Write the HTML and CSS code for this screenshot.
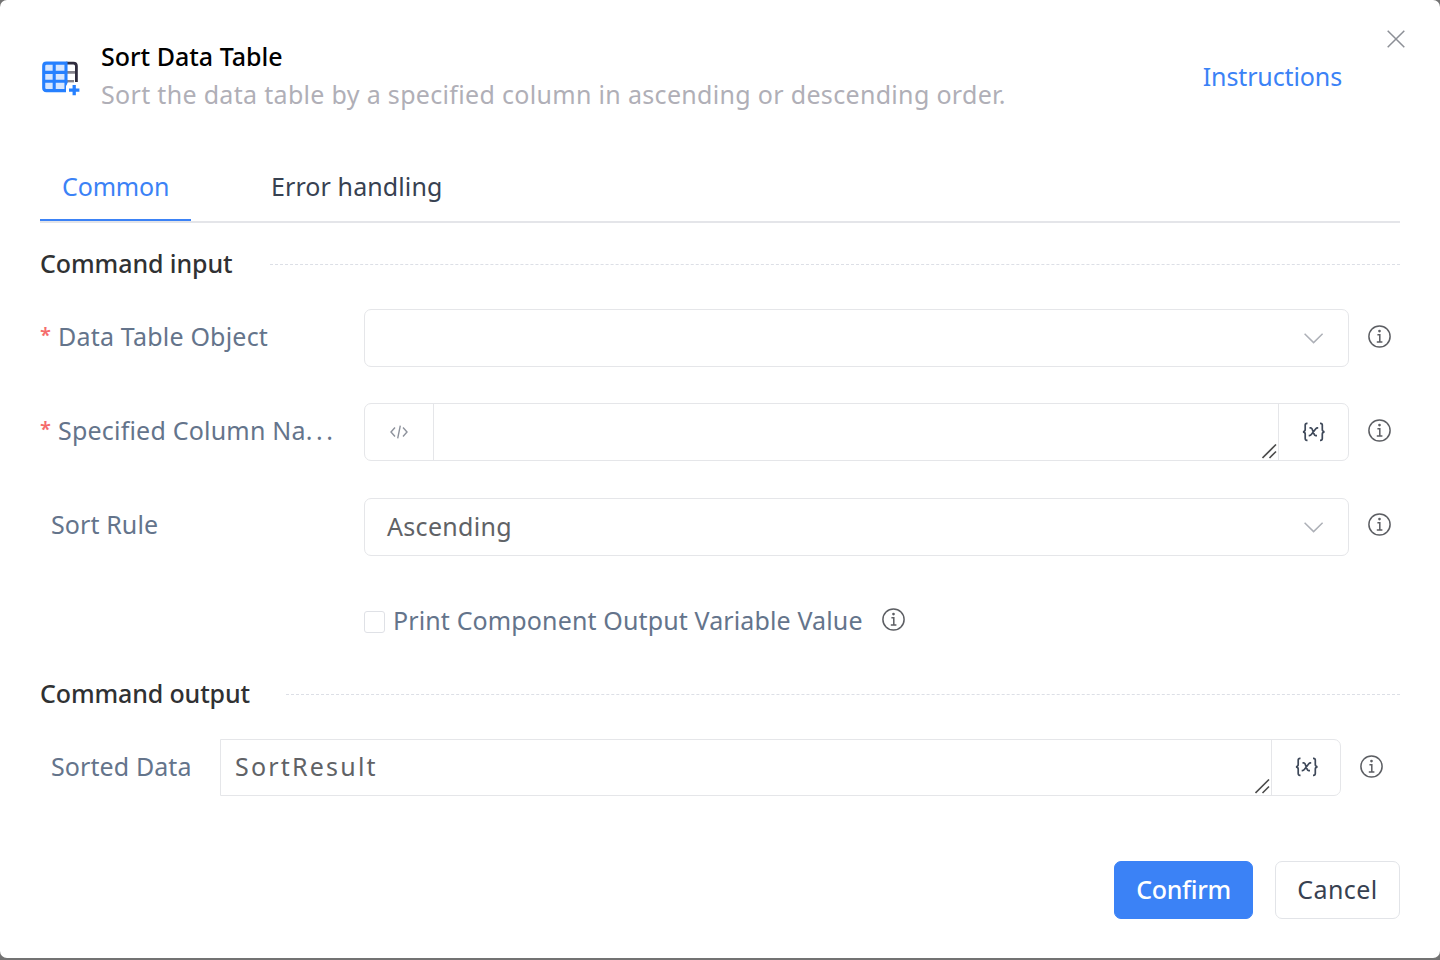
FILE: index.html
```
<!DOCTYPE html>
<html lang="en">
<head>
<meta charset="utf-8">
<title>Sort Data Table</title>
<link rel="stylesheet" href="styles.css">
</head>
<body>
<svg width="0" height="0" class="defs">
  <symbol id="info" viewBox="0 0 24 24"><g fill="none" stroke="#5c5e63" stroke-width="1.5"><circle cx="11.5" cy="11.5" r="10.6"/><path d="M9.4 9.8h2.4v7.2M8.8 17h5.6"/></g><circle cx="11.5" cy="6.1" r="1.35" fill="#5c5e63"/></symbol>
  <symbol id="variable" viewBox="0 0 24 20"><g fill="none" stroke="#3e4859" stroke-width="1.7"><path d="M5.5 1.3H5Q3.2 1.3 3.2 3V7.6Q3.2 9.5 1 9.8Q3.2 10.1 3.2 12V16.6Q3.2 18.3 5 18.3H5.5"/><path d="M18 1.3H18.5Q20.3 1.3 20.3 3V7.6Q20.3 9.5 22.5 9.8Q20.3 10.1 20.3 12V16.6Q20.3 18.3 18.5 18.3H18"/><path d="M7.5 5.8H8.7Q9.6 5.8 10 6.8L12.2 12.4Q12.7 13.6 13.7 13.6H15M16.2 5.8H15.5Q14.5 5.8 13.8 6.7L9.3 12.5Q8.5 13.6 7.3 13.6H6.7"/></g></symbol>
  <symbol id="chevron" viewBox="0 0 20 12"><path d="M.6 1.8L9.6 10.6L18.6 1.8" fill="none" stroke="#adb0b7" stroke-width="1.5"/></symbol>
  <symbol id="grip" viewBox="0 0 15 15"><path d="M.5 14L14 .5M7.5 14L14 7.5" fill="none" stroke="#4d4d4d" stroke-width="1.6"/></symbol>
</svg>
<main class="dialog">
  <header class="header">
    <svg class="logo" viewBox="0 0 40 36">
      <path d="M26 12.4H36M26 21.3H34" stroke="#85838c" stroke-width="2.8"/>
      <path d="M26 3.1H33.5Q36.4 3.1 36.4 6V22" fill="none" stroke="#302d3e" stroke-width="2.8"/>
      <path d="M6.5 3.1H26V30.6H6.5Q3.7 30.6 3.7 28V6Q3.7 3.1 6.5 3.1Z" fill="#d6e6ff" stroke="#2680ff" stroke-width="3.1"/>
      <path d="M14.2 3V31M4 12.4H26M4 21.3H26" stroke="#2680ff" stroke-width="3.1"/>
      <path d="M28 22.5H40V36H26V26Z" fill="#fff"/>
      <path d="M34.2 24.9V35.3M29 30.1H39.4" stroke="#2680ff" stroke-width="3.3"/>
    </svg>
    <div class="heading">
      <h1 class="title">Sort Data Table</h1>
      <p class="subtitle">Sort the data table by a specified column in ascending or descending order.</p>
    </div>
    <a class="instructions">Instructions</a>
    <svg class="close" viewBox="0 0 18 18"><path d="M.7 .7L17.3 17.3M17.3 .7L.7 17.3" stroke="#8c8f96" stroke-width="1.5"/></svg>
  </header>
  <nav class="tabs">
    <div class="tab tab-active">Common</div>
    <div class="tab">Error handling</div>
  </nav>
  <h2 class="section section-input"><span>Command input</span></h2>
  <div class="row">
    <label class="label"><i class="star">*</i><span>Data Table Object</span></label>
    <div class="control"><span class="grow"></span><svg class="chevron"><use href="#chevron"/></svg></div>
    <svg class="info"><use href="#info"/></svg>
  </div>
  <div class="row row-column">
    <label class="label"><i class="star">*</i><span>Specified Column Na<span class="dots">...</span></span></label>
    <div class="control">
      <span class="prefix"><svg class="code" viewBox="0 0 18 14"><path d="M5 2.5L1 7L5 11.5M13 2.5L17 7L13 11.5M10.3 .7L7.7 13.3" fill="none" stroke="#8d929c" stroke-width="1.4"/></svg></span>
      <span class="grow field"><svg class="grip"><use href="#grip"/></svg></span>
      <span class="suffix"><svg class="variable"><use href="#variable"/></svg></span>
    </div>
    <svg class="info"><use href="#info"/></svg>
  </div>
  <div class="row row-rule">
    <label class="label label-plain">Sort Rule</label>
    <div class="control"><span class="grow value">Ascending</span><svg class="chevron"><use href="#chevron"/></svg></div>
    <svg class="info"><use href="#info"/></svg>
  </div>
  <div class="check-row"><span class="checkbox"></span><span class="check-label">Print Component Output Variable Value</span><svg class="info"><use href="#info"/></svg></div>
  <h2 class="section section-output"><span>Command output</span></h2>
  <div class="row row-output">
    <label class="label label-output">Sorted Data</label>
    <div class="control control-output">
      <span class="grow field result"><span class="result-text">SortResult</span><svg class="grip"><use href="#grip"/></svg></span>
      <span class="suffix"><svg class="variable"><use href="#variable"/></svg></span>
    </div>
    <svg class="info"><use href="#info"/></svg>
  </div>
  <footer class="footer">
    <button class="button button-primary">Confirm</button>
    <button class="button">Cancel</button>
  </footer>
</main>
</body>
</html>
```
FILE: styles.css
```
* { box-sizing: border-box; }
body { margin: 0; background: #737373; font: 25px/38px "Noto Sans", "Open Sans", sans-serif; color: #64748b; white-space: nowrap; }
h1, h2, p { margin: 0; font-size: 25px; }
svg { display: block; flex: none; }
.defs { position: absolute; }
.dialog { height: 958px; padding: 37px 40px 0; background: #fff; border-radius: 7px; overflow: hidden; }
.header { display: flex; height: 117px; }
.logo { width: 40px; height: 36px; margin: 23px 20px 0 0; }
.heading { flex: 1; padding-left: 1px; }
.title { color: #000; font-weight: 500; }
.subtitle { color: #b0afb7; letter-spacing: .32px; }
.instructions { margin: 20px 45px 0 0; color: #3b82f6; letter-spacing: -.12px; }
.close { width: 18px; height: 18px; margin: -7px -5px 0 0; }
.tabs { display: flex; gap: 58px; height: 69px; border-bottom: 2px solid #e4e5e9; }
.tab { height: 67px; padding: 13px 22px 0; color: #374151; letter-spacing: .1px; }
.tab-active { width: 151px; color: #3b82f6; border-bottom: 2px solid #3b82f6; letter-spacing: -.15px; }
.section { display: flex; align-items: center; gap: 37px; height: 38px; margin-top: 22px; color: #303133; font-weight: 500; letter-spacing: -.08px; }
.section span { padding-bottom: 2px; }
.section::after { content: ""; flex: 1; border-top: 1px dashed #dcdfe6; }
.row { display: flex; align-items: center; height: 58px; margin-top: 26px; }
.row-column { margin-top: 36px; }
.row-rule { margin-top: 37px; }
.label { display: flex; width: 324px; padding-bottom: 5px; letter-spacing: .2px; }
.label-plain { padding-bottom: 7px; padding-left: 11px; letter-spacing: .1px; }
.star { width: 18px; color: #f56c6c; font-size: 20px; font-weight: 600; font-style: normal; line-height: 36px; }
.dots { letter-spacing: 3.6px; }
.control { display: flex; align-items: center; width: 985px; height: 58px; border: 1px solid #e5e6e9; border-radius: 7px; }
.grow { flex: 1; }
.value { padding: 0 0 2px 22px; color: #606266; letter-spacing: .32px; }
.chevron { width: 20px; height: 12px; margin-right: 24px; }
.info { width: 24px; height: 24px; }
.row .info { margin: 0 0 2px 19px; }
.prefix, .suffix { display: flex; align-items: center; justify-content: center; width: 69px; height: 100%; }
.prefix { border-right: 1px solid #e5e6e9; }
.suffix { width: 70px; border-left: 1px solid #e5e6e9; }
.code { width: 18px; height: 14px; }
.variable { width: 24px; height: 20px; margin-top: -1px; }
.field { display: flex; align-items: center; height: 100%; }
.grip { width: 15px; height: 15px; margin: auto 1px 1px auto; }
.check-row { display: flex; align-items: center; height: 38px; margin: 45px 0 0 324px; }
.check-label { letter-spacing: .13px; }
.checkbox { width: 21px; height: 22px; margin: 3px 8px 0 0; border: 1px solid #dfe1e6; border-radius: 3px; }
.check-row .info { margin-left: 19px; }
.section-output { margin-top: 36px; gap: 36px; letter-spacing: -.13px; }
.row-output { height: 57px; margin-top: 26px; }
.label-output { width: 180px; padding: 0 0 4px 11px; letter-spacing: .1px; }
.control-output { width: 1121px; height: 57px; border-radius: 0 7px 7px 0; }
.control-output .suffix { width: 69px; padding-left: 1px; }
.result { padding-left: 14px; color: #606266; letter-spacing: 2.2px; }
.result-text { padding-bottom: 4px; }
.row-rule .info { margin-bottom: 5px; }
.footer { display: flex; justify-content: flex-end; gap: 22px; margin-top: 65px; }
.button { width: 125px; height: 58px; padding: 0 0 2px; border: 1px solid #e2e4e8; border-radius: 7px; background: #fff; color: #374151; font: inherit; letter-spacing: .45px; }
.button-primary { width: 139px; border-color: #3b82f6; background: #3b82f6; color: #fff; font-weight: 500; letter-spacing: -.3px; }
```
